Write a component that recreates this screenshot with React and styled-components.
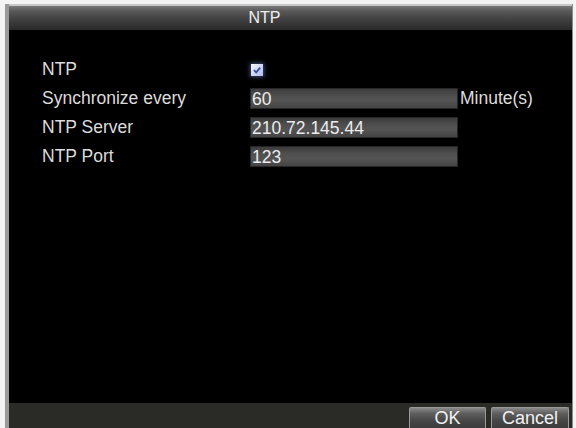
import React from "react";
import styled, { createGlobalStyle } from "styled-components";

const Global = createGlobalStyle`
  html, body { margin: 0; padding: 0; overflow: hidden; background: #f4f4f4; }
  #root { width: 576px; height: 428px; }
`;

const Page = styled.div`
  width: 576px;
  height: 428px;
  padding: 4px 3px 0 5px;
  box-sizing: border-box;
  font-family: "Liberation Sans", Arial, sans-serif;
`;

const Window = styled.div`
  height: 424px;
  display: flex;
  flex-direction: column;
  background: #000;
  border-left: 4px solid #9a9a9a;
  border-right: 1px solid #8a8a8a;
  box-sizing: border-box;
`;

const TitleBar = styled.div`
  height: 26px;
  flex: none;
  box-sizing: border-box;
  border-top: 2px solid #c8c8c8;
  background: linear-gradient(#7a7a7a 0%, #5a5a5a 20%, #484848 45%, #363636 75%, #2a2a2a 100%);
  color: #f0f0f0;
  font-size: 16px;
  line-height: 23px;
  text-align: center;
  padding-right: 52px;
`;

const Content = styled.div`
  flex: 1;
  padding: 29px 0 0 33px;
  display: flex;
  flex-direction: column;
  gap: 8px;
`;

const Row = styled.div`
  display: grid;
  grid-template-columns: 208px auto;
  align-items: center;
  height: 21px;
`;

const Label = styled.div`
  color: #dcdcdc;
  font-size: 17.5px;
  white-space: nowrap;
`;

const FieldWrap = styled.div`
  display: flex;
  align-items: center;
  gap: 2px;
`;

const Field = styled.div`
  width: 208px;
  height: 21px;
  box-sizing: border-box;
  border: 1px solid #262626;
  background: linear-gradient(#3c3c3c 0%, #4e4e4e 35%, #545454 60%, #444 100%);
  color: #ececec;
  font-size: 17.5px;
  line-height: 20px;
  padding-left: 1px;
  white-space: nowrap;
`;

const Unit = styled.span`
  color: #dcdcdc;
  font-size: 17.5px;
`;

const Check = styled.div`
  width: 12px;
  height: 12px;
  margin-left: 1px;
  box-shadow: 0 0 4px 1px rgba(120, 140, 220, 0.55);
  display: flex;
`;

const Footer = styled.div`
  height: 25px;
  flex: none;
  background: #2a2a27;
  display: flex;
  justify-content: flex-end;
  align-items: flex-start;
  gap: 5px;
  padding: 4px 3px 0 0;
  box-sizing: border-box;
  overflow: hidden;
`;

const Button = styled.div`
  width: ${(p) => p.$w}px;
  height: 23px;
  box-sizing: border-box;
  border: 1px solid #9a9a9a;
  border-bottom: none;
  border-radius: 2px 2px 0 0;
  background: linear-gradient(#8a8a8a 0%, #5e5e5e 25%, #454545 60%, #3a3a3a 100%);
  color: #f2f2f2;
  font-size: 18px;
  line-height: 21px;
  text-align: center;
`;

export default function App() {
  return (
    <>
      <Global />
      <Page>
        <Window>
          <TitleBar>NTP</TitleBar>
          <Content>
            <Row>
              <Label>NTP</Label>
              <Check>
                <svg width="12" height="12" viewBox="0 0 12 12">
                  <defs>
                    <linearGradient id="cb" x1="0" y1="0" x2="1" y2="1">
                      <stop offset="0" stopColor="#f4f6ff" />
                      <stop offset="1" stopColor="#aebbe8" />
                    </linearGradient>
                  </defs>
                  <rect x="0" y="0" width="12" height="12" fill="url(#cb)" />
                  <path d="M3 6.2 L5.2 8.4 L9.2 3.6" stroke="#3a4fa8" strokeWidth="1.8" fill="none" />
                </svg>
              </Check>
            </Row>
            <Row>
              <Label>Synchronize every</Label>
              <FieldWrap>
                <Field>60</Field>
                <Unit>Minute(s)</Unit>
              </FieldWrap>
            </Row>
            <Row>
              <Label>NTP Server</Label>
              <Field>210.72.145.44</Field>
            </Row>
            <Row>
              <Label>NTP Port</Label>
              <Field>123</Field>
            </Row>
          </Content>
          <Footer>
            <Button $w={77}>OK</Button>
            <Button $w={78}>Cancel</Button>
          </Footer>
        </Window>
      </Page>
    </>
  );
}
